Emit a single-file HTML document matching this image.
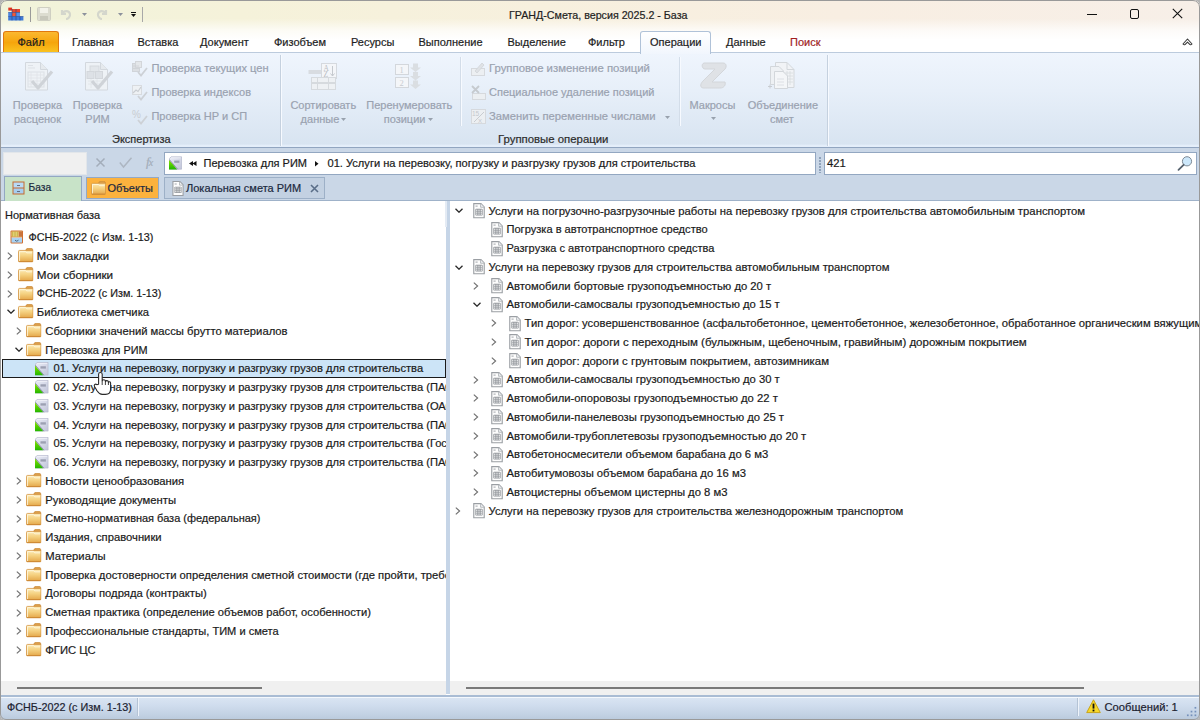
<!DOCTYPE html>
<html><head><meta charset="utf-8">
<style>
*{box-sizing:border-box;margin:0;padding:0}
html,body{width:1200px;height:720px;overflow:hidden;background:#b4b4b4}
body{font-family:"Liberation Sans",sans-serif;font-size:11px;color:#1a1a1a;position:relative;-webkit-text-stroke-width:0.2px}
.a{position:absolute;white-space:nowrap}
svg{position:absolute;overflow:visible}
#win{position:absolute;left:0;top:0;width:1200px;height:720px;border-radius:7px 7px 6px 6px;overflow:hidden;background:#fff}
#frame{position:absolute;left:0;top:0;width:1200px;height:720px;border:1px solid #999;border-radius:7px 7px 6px 6px;pointer-events:none}
#title{position:absolute;left:0;top:0;width:1200px;height:53px;background:linear-gradient(180deg,rgba(255,255,255,0) 0%,rgba(255,255,255,0) 35%,rgba(255,255,255,.75) 58%,#fff 75%,#fff 100%),linear-gradient(90deg,#f1f3da 0%,#f5f2da 20%,#f7f0de 45%,#f8eee2 70%,#f7efe8 100%)}
#ribbon{position:absolute;left:0;top:52px;width:1200px;height:96px;border-top:1px solid #bccbdd;background:linear-gradient(180deg,#eff5fd 0%,#e7eff9 40%,#d8e4f1 97%,#e4eefa 98%,#e4eefa 100%);border-bottom:1px solid #91a5c0}
.tab{position:absolute;top:31px;height:22px;line-height:22px;color:#1e1e1e}
.dis{color:#9aa2b0}
.lt{position:absolute;white-space:nowrap;line-height:14px}
.sep{position:absolute;width:1px;background:#c5d1df;box-shadow:1px 0 0 #f7faff}
#fbar{position:absolute;left:0;top:148px;width:1200px;height:53px;background:#cad7e7;border-bottom:1px solid #9fb2c9}
.panel{position:absolute;top:201px;background:#fff;overflow:hidden}
.row{position:absolute;height:18.75px;line-height:18.75px;white-space:nowrap;font-size:11.25px}
#status{position:absolute;left:0;top:695px;width:1200px;height:25px;border-top:2px solid #a9bcd4;box-shadow:inset 0 1px 0 #f4f8fd;background:linear-gradient(180deg,#dae5f3 0%,#d0ddee 35%,#c3d2e4 75%,#b9c9dc 100%)}
</style></head>
<body>

<svg width="0" height="0" style="position:absolute">
  <defs>
    <linearGradient id="fg" x1="0" y1="0" x2="0" y2="1"><stop offset="0" stop-color="#fdeab6"/><stop offset="0.45" stop-color="#f5d282"/><stop offset="1" stop-color="#e4a648"/></linearGradient>
    <linearGradient id="gd" x1="0" y1="0" x2="1" y2="1"><stop offset="0" stop-color="#eceef8"/><stop offset="1" stop-color="#c0c4d8"/></linearGradient>
    <linearGradient id="gg" x1="0" y1="0" x2="0" y2="1"><stop offset="0" stop-color="#8ae600"/><stop offset="1" stop-color="#1fb400"/></linearGradient>
    <symbol id="folder" viewBox="0 0 16 15">
      <path d="M8 3 Q8 0.3 10.5 0.3 H13.5 Q15.6 0.3 15.6 3 Z" fill="#dda04c" stroke="#c98a38" stroke-width="0.7"/>
      <rect x="0.5" y="2.5" width="15" height="12" rx="1" fill="url(#fg)" stroke="#d3923e" stroke-width="0.8"/>
      <path d="M1.6 13.6 V3.8 H8 L9 5 H14.6" fill="none" stroke="#fffbe8" stroke-width="0.9" opacity="0.9"/>
      <path d="M1 14 H15" stroke="#c98430" stroke-width="0.8"/>
    </symbol>
    <symbol id="doc" viewBox="0 0 12 16">
      <path d="M0.6 0.6 H8 L11.4 4 V15.4 H0.6 Z" fill="#fdfdfd" stroke="#9a9ea3" stroke-width="1.15"/>
      <path d="M7.6 0.8 V4.4 H11.2" fill="#eef0f2" stroke="#b0b4b8" stroke-width="0.9"/>
      <path d="M2.4 3.2 H4.6" stroke="#9ea2a7" stroke-width="1"/>
      <rect x="2.2" y="6" width="7.6" height="6.8" rx="0.9" fill="#92969b"/>
      <rect x="3.00" y="6.90" width="1.30" height="1.1" fill="#fff"/><rect x="5.35" y="6.90" width="1.30" height="1.1" fill="#fff"/><rect x="7.70" y="6.90" width="1.40" height="1.1" fill="#fff"/><rect x="3.00" y="8.90" width="1.30" height="1.1" fill="#fff"/><rect x="5.35" y="8.90" width="1.30" height="1.1" fill="#fff"/><rect x="7.70" y="8.90" width="1.40" height="1.1" fill="#fff"/><rect x="3.00" y="10.90" width="1.30" height="1.1" fill="#fff"/><rect x="5.35" y="10.90" width="1.30" height="1.1" fill="#fff"/><rect x="7.70" y="10.90" width="1.40" height="1.1" fill="#fff"/>
    </symbol>
    <symbol id="gdoc" viewBox="0 0 14 14">
      <path d="M2.2 0.4 H13.6 V13.6 H0.4 V2.2 Z" fill="url(#gd)" stroke="#b2b6ca" stroke-width="0.8"/>
      <path d="M2.2 1.4 H12.6" stroke="#f4f5fb" stroke-width="0.8"/>
      <path d="M0 3.6 L8.8 14 H0 Z" fill="url(#gg)"/>
      <path d="M0.4 3.4 L9.4 13.8" stroke="#8a8ea8" stroke-width="1"/>
      <rect x="5.6" y="4.4" width="5.6" height="2.4" fill="#9ca0b2"/>
    </symbol>
    <symbol id="chr" viewBox="0 0 6 8"><path d="M0.8 0.6 L4.6 4 L0.8 7.4" fill="none" stroke="#707070" stroke-width="1.15"/></symbol>
    <symbol id="chd" viewBox="0 0 8 5"><path d="M0.5 0.7 L4 4.2 L7.5 0.7" fill="none" stroke="#2a2a2a" stroke-width="1.3"/></symbol>
  </defs>
</svg>
<div id="win">
  <div id="title">
    <!-- app icon -->
    <svg style="left:8px;top:7px" width="16" height="14" viewBox="0 0 16 14">
      <rect x="0.3" y="0.6" width="3.8" height="3" fill="#e2331f"/>
      <rect x="4" y="2" width="8" height="3.5" fill="#e8452c"/>
      <rect x="4" y="5.5" width="4" height="4" fill="#f05a3a"/>
      <rect x="0.2" y="5.5" width="3.8" height="4" fill="#4b86e0"/>
      <rect x="8" y="5.5" width="4" height="4" fill="#5a94ea"/>
      <rect x="0.2" y="9.5" width="15.2" height="4" fill="#3f7ad8"/>
      <path d="M4 2 V13.5 M8 2 V13.5 M12 9.5 V13.5 M0.2 9.5 H15.4 M0.2 5.5 H12" stroke="#1a3f90" stroke-width="0.7" opacity="0.8"/>
    </svg>
    <div class="a" style="left:30px;top:7px;width:1px;height:15px;background:#9a9a9a"></div>
    <!-- save -->
    <svg style="left:37px;top:7px" width="14" height="14" viewBox="0 0 14 14">
      <rect x="0.5" y="0.5" width="13" height="13" rx="1" fill="#dcdcd0" stroke="#cfcfc2"/>
      <rect x="3" y="1" width="8" height="5" fill="#f2f2ea"/>
      <rect x="3" y="9" width="8" height="4" fill="#c8c8bc"/>
    </svg>
    <!-- undo -->
    <svg style="left:60px;top:9px" width="12" height="11" viewBox="0 0 12 11">
      <path d="M2 1 L2 5 L6 5 M2.5 4.5 C4 1.5 9 1 10 5 C10.5 7.5 8 10 6 10" fill="none" stroke="#d4d6cc" stroke-width="2.2"/>
    </svg>
    <svg style="left:82px;top:13px" width="5" height="3" viewBox="0 0 5 3"><path d="M0 0 H5 L2.5 3Z" fill="#8c919c"/></svg>
    <svg style="left:96px;top:9px" width="12" height="11" viewBox="0 0 12 11">
      <path d="M10 1 L10 5 L6 5 M9.5 4.5 C8 1.5 3 1 2 5 C1.5 7.5 4 10 6 10" fill="none" stroke="#d4d6cc" stroke-width="2.2"/>
    </svg>
    <svg style="left:118px;top:13px" width="5" height="3" viewBox="0 0 5 3"><path d="M0 0 H5 L2.5 3Z" fill="#8c919c"/></svg>
    <div class="a" style="left:131px;top:12px;width:5px;height:1px;background:#111"></div>
    <svg style="left:131px;top:14px" width="5" height="3" viewBox="0 0 5 3"><path d="M0 0 H5 L2.5 3Z" fill="#111"/></svg>
    <div class="a" style="left:142px;top:7px;width:1px;height:15px;background:#a8a8a8"></div>

    <div class="a" style="left:509px;top:8px;font-size:10.7px;line-height:14px;color:#1e1e1e">ГРАНД-Смета, версия 2025.2 - База</div>

    <!-- window controls -->
    <div class="a" style="left:1087px;top:14px;width:10px;height:1px;background:#111"></div>
    <div class="a" style="left:1130px;top:9px;width:9px;height:10px;border:1.2px solid #111;border-radius:2px"></div>
    <svg style="left:1172px;top:8px" width="11" height="11" viewBox="0 0 11 11"><path d="M0.8 0.8 L10.2 10.2 M10.2 0.8 L0.8 10.2" stroke="#111" stroke-width="1.1"/></svg>
    <svg style="left:1182px;top:37px" width="11" height="9" viewBox="0 0 11 9"><path d="M1 7 L5.5 2 L10 7 Q9 8.2 8 7.6 L5.5 5.2 L3 7.6 Q2 8.2 1 7 Z" fill="#fff" stroke="#3a3a3a" stroke-width="1.1" stroke-linejoin="round"/></svg>

    <!-- tabs -->
    <div class="a" style="left:3px;top:31px;width:56px;height:22px;border:1px solid #e0780e;border-bottom:none;border-radius:3px 3px 0 0;background:linear-gradient(180deg,#fbb830 0%,#f6a50c 50%,#fac522 100%)"></div>
    <div class="tab" style="left:17.5px">Файл</div>
    <div class="tab" style="left:72px">Главная</div>
    <div class="tab" style="left:137.5px">Вставка</div>
    <div class="tab" style="left:200px">Документ</div>
    <div class="tab" style="left:274px">Физобъем</div>
    <div class="tab" style="left:351px">Ресурсы</div>
    <div class="tab" style="left:418.5px">Выполнение</div>
    <div class="tab" style="left:507.5px">Выделение</div>
    <div class="tab" style="left:588px">Фильтр</div>
    <div class="a" style="left:640px;top:31px;width:71px;height:23px;border:1px solid #b0c2d8;border-bottom:none;border-radius:3px 3px 0 0;background:linear-gradient(180deg,#ffffff 0%,#f1f6fd 100%);z-index:2"></div>
    <div class="tab" style="left:650px;z-index:3">Операции</div>
    <div class="tab" style="left:726px">Данные</div>
    <div class="tab" style="left:790px;color:#a01e1e">Поиск</div>
  </div>

  <div id="ribbon"></div>

  <!-- ===== ribbon content ===== -->
  <!-- big icon: Проверка расценок -->
  <svg style="left:25px;top:62px" width="28" height="29" viewBox="0 0 28 29">
    <path d="M0.5 0.5 H15.5 L22.5 7.5 V28 H0.5 Z" fill="#eef2f6" stroke="#d3d8de"/>
    <path d="M15.5 0.5 V7.5 H22.5" fill="#e6eaee" stroke="#d3d8de"/>
    <path d="M3 3.5 H8 M3 6 H10" stroke="#dde1e6"/>
    <rect x="3" y="10" width="16" height="15" fill="none" stroke="#dce0e5"/>
    <path d="M3 13 H19 M3 16 H19 M3 19 H19 M3 22 H19 M6 10 V25 M12 10 V25 M15.5 10 V25" stroke="#dfe3e8" stroke-width="0.8"/>
    <path d="M7 19 L13 26 L27 9.5" fill="none" stroke="#cfd3d8" stroke-width="3.2" stroke-linejoin="round"/>
  </svg>
  <!-- big icon: Проверка РИМ -->
  <svg style="left:85px;top:62px" width="28" height="29" viewBox="0 0 28 29">
    <path d="M0.5 0.5 H15.5 L22.5 7.5 V28 H0.5 Z" fill="#eef2f6" stroke="#d3d8de"/>
    <path d="M15.5 0.5 V7.5 H22.5" fill="#e6eaee" stroke="#d3d8de"/>
    <rect x="5" y="4" width="9" height="6" fill="#e3e7eb" stroke="#d5d9de"/>
    <rect x="2" y="9.5" width="7" height="7" fill="#dde1e6" stroke="#d3d7dc"/>
    <rect x="10.5" y="9.5" width="7" height="7" fill="#dde1e6" stroke="#d3d7dc"/>
    <path d="M3 19 H19 M3 22 H19 M6 17 V26 M12 17 V26" stroke="#e0e4e8" stroke-width="0.8"/>
    <path d="M7 19 L13 26 L27 9.5" fill="none" stroke="#cfd3d8" stroke-width="3.2" stroke-linejoin="round"/>
  </svg>
  <div class="lt dis" style="left:12.5px;top:98.3px;width:50px;text-align:center">Проверка</div>
  <div class="lt dis" style="left:13.5px;top:112.2px;width:48px;text-align:center">расценок</div>
  <div class="lt dis" style="left:72.5px;top:98.3px;width:50px;text-align:center">Проверка</div>
  <div class="lt dis" style="left:84.5px;top:112.2px;width:26px;text-align:center">РИМ</div>
  <!-- small icons Экспертиза -->
  <svg style="left:132px;top:61px" width="16" height="16" viewBox="0 0 16 16">
    <rect x="0.5" y="2.5" width="7" height="8" fill="#dcdfe3" stroke="#d0d4d9"/>
    <rect x="3.5" y="0.5" width="6" height="6" fill="#e4e7ea" stroke="#d3d6da"/>
    <path d="M1 5 H7 M1 7.5 H7" stroke="#cdd1d6" stroke-width="0.8"/>
    <path d="M6 11 L9 14.5 L15 7" fill="none" stroke="#cdd1d6" stroke-width="1.8"/>
  </svg>
  <svg style="left:132px;top:85px" width="16" height="16" viewBox="0 0 16 16">
    <rect x="0.5" y="0.5" width="9" height="9" fill="#eef1f4" stroke="#d8dbdf"/>
    <path d="M1 8 L4 5 L6 6.5 L9 2" fill="none" stroke="#c9cdd2" stroke-width="1.2"/>
    <path d="M6 11 L9 14.5 L15 7" fill="none" stroke="#cdd1d6" stroke-width="1.8"/>
  </svg>
  <svg style="left:132px;top:109px" width="16" height="16" viewBox="0 0 16 16">
    <text x="0" y="9" font-size="10" font-family="Liberation Sans" fill="#c8ccd1">%</text>
    <path d="M6 11 L9 14.5 L15 7" fill="none" stroke="#cdd1d6" stroke-width="1.8"/>
  </svg>
  <div class="lt dis" style="left:151.4px;top:61.2px;font-size:11.13px">Проверка текущих цен</div>
  <div class="lt dis" style="left:151.4px;top:85.2px">Проверка индексов</div>
  <div class="lt dis" style="left:151.4px;top:109.2px">Проверка НР и СП</div>
  <div class="lt" style="left:112px;top:131.5px;color:#2c2c2c">Экспертиза</div>
  <div class="sep" style="left:280px;top:55px;height:91px"></div>

  <!-- sort -->
  <svg style="left:308px;top:63px" width="30" height="28" viewBox="0 0 30 28">
    <rect x="0.5" y="7" width="13" height="4" fill="#d8dce1"/>
    <rect x="13.5" y="0.5" width="15" height="15" fill="#f4f6f9" stroke="#d5d9de"/>
    <text x="15.5" y="7.5" font-size="7.5" font-family="Liberation Serif" fill="#b9bdc3">A</text>
    <text x="15.5" y="14.3" font-size="7.5" font-family="Liberation Serif" fill="#b9bdc3">Z</text>
    <path d="M24.5 3 V13 M22.5 10.5 L24.5 13 L26.5 10.5" fill="none" stroke="#c5c9ce"/>
    <rect x="3.5" y="14.5" width="24" height="5" fill="#eef1f4" stroke="#d6dade"/>
    <rect x="3.5" y="20.5" width="24" height="6" fill="#eef1f4" stroke="#d6dade"/>
    <path d="M9.5 14.5 V26.5 M20.5 14.5 V26.5" stroke="#d6dade"/>
  </svg>
  <!-- renumber -->
  <svg style="left:395px;top:63px" width="27" height="28" viewBox="0 0 27 28">
    <rect x="0.5" y="1.5" width="13" height="10" fill="#f4f6f9" stroke="#d3d7dc"/>
    <rect x="0.5" y="14.5" width="13" height="10" fill="#f4f6f9" stroke="#d3d7dc"/>
    <text x="4.5" y="10" font-size="8.5" font-family="Liberation Serif" fill="#c8ccd1">1</text>
    <text x="4.5" y="23" font-size="8.5" font-family="Liberation Serif" fill="#c8ccd1">2</text>
    <path d="M18 0.5 H23 V4.5 H26 L20.5 9 L15 4.5 H18Z M18 9 H23 V13 H26 L20.5 17.5 L15 13 H18Z M18 17.5 H23 V21.5 H26 L20.5 26 L15 21.5 H18Z" fill="#dadee2"/>
  </svg>
  <div class="lt dis" style="left:290.3px;top:98.3px;width:66px;text-align:center">Сортировать</div>
  <div class="lt dis" style="left:300.6px;top:112.2px">данные</div>
  <svg style="left:341px;top:118px" width="5" height="3" viewBox="0 0 5 3"><path d="M0 0 H5 L2.5 3Z" fill="#98a1ad"/></svg>
  <div class="lt dis" style="left:366.3px;top:98.3px">Перенумеровать</div>
  <div class="lt dis" style="left:383.7px;top:112.2px">позиции</div>
  <svg style="left:428px;top:118px" width="5" height="3" viewBox="0 0 5 3"><path d="M0 0 H5 L2.5 3Z" fill="#98a1ad"/></svg>
  <div class="sep" style="left:460px;top:57px;height:69px;background:#d3dde9"></div>

  <!-- group ops small icons -->
  <svg style="left:471px;top:61px" width="16" height="16" viewBox="0 0 16 16">
    <rect x="0.5" y="7.5" width="13" height="7" fill="#eceff2" stroke="#d6d9dd"/>
    <path d="M4 10 L11 2 L13 4 L6 12 Z" fill="#dfe2e6" stroke="#d0d4d8" stroke-width="0.8"/>
  </svg>
  <svg style="left:471px;top:85px" width="16" height="16" viewBox="0 0 16 16">
    <rect x="1.5" y="8.5" width="13" height="6" fill="#eceff2" stroke="#d6d9dd"/>
    <path d="M1 1 L8 8 M8 1 L1 8" stroke="#c6cacf" stroke-width="1.8"/>
  </svg>
  <svg style="left:471px;top:109px" width="16" height="16" viewBox="0 0 16 16">
    <rect x="0.5" y="0.5" width="14" height="14" fill="#eceff2" stroke="#d6d9dd"/>
    <text x="1" y="7" font-size="6.5" font-family="Liberation Sans" fill="#c4c8cd">15</text>
    <path d="M3 13 L13 3" stroke="#c8ccd1"/>
    <text x="7" y="13.5" font-size="6" font-family="Liberation Sans" fill="#c4c8cd">X</text>
  </svg>
  <div class="lt dis" style="left:489px;top:61.2px;font-size:11.35px">Групповое изменение позиций</div>
  <div class="lt dis" style="left:489px;top:85.2px">Специальное удаление позиций</div>
  <div class="lt dis" style="left:489px;top:109.2px;font-size:11.23px">Заменить переменные числами</div>
  <svg style="left:665px;top:116px" width="5" height="3" viewBox="0 0 5 3"><path d="M0 0 H5 L2.5 3Z" fill="#98a1ad"/></svg>
  <div class="lt" style="left:498px;top:131.5px;color:#2c2c2c;font-size:11.38px">Групповые операции</div>
  <div class="sep" style="left:679px;top:57px;height:69px;background:#d3dde9"></div>

  <!-- macros -->
  <svg style="left:700px;top:62px" width="28" height="27" viewBox="0 0 28 27">
    <path d="M4 1 H23 C27 1 27 6 24 8 L12 20 H25 C26 23 24 26 20 26 H3 C-1 25 1 21 3 19 L15 7 H5 C2 7 1 2 4 1 Z" fill="#dfe2e6" stroke="#d3d6da"/>
  </svg>
  <div class="lt dis" style="left:689.5px;top:98.3px">Макросы</div>
  <svg style="left:711px;top:117px" width="5" height="3" viewBox="0 0 5 3"><path d="M0 0 H5 L2.5 3Z" fill="#98a1ad"/></svg>
  <!-- merge -->
  <svg style="left:768px;top:62px" width="27" height="28" viewBox="0 0 27 28">
    <path d="M7.5 0.5 H19 L26 7.5 V25.5 H7.5 Z" fill="#f1f3f6" stroke="#d3d7db"/>
    <path d="M19 0.5 V7.5 H26" fill="none" stroke="#d3d7db"/>
    <path d="M16 11 H25 M16 14 H25 M16 17 H25 M16 20 H25 M19 9 V23 M22 9 V23" stroke="#d8dce0" stroke-width="0.8"/>
    <path d="M2.5 4.5 H11 L15.5 9 V22.5 H2.5 Z" fill="#eef1f4" stroke="#d3d7db"/>
    <path d="M6.5 9.5 H15 L19.5 14 V26.5 H6.5 Z" fill="#f4f6f8" stroke="#d3d7db"/>
    <path d="M9 17 H16 M9 20 H16 M9 23 H16" stroke="#d8dce0" stroke-width="0.8"/>
    <path d="M0 24.5 H4 M2 22.5 V26.5" stroke="#c8ccd1"/>
  </svg>
  <div class="lt dis" style="left:747.7px;top:98.3px">Объединение</div>
  <div class="lt dis" style="left:770px;top:112.2px">смет</div>
  <div class="sep" style="left:827px;top:55px;height:91px"></div>

  <div id="fbar"></div>

  <!-- formula bar -->
  <div class="a" style="left:3px;top:152px;width:84px;height:23px;background:#f0f0f0;border:1px solid #e2e6ea"></div>
  <svg style="left:96px;top:158px" width="9" height="9" viewBox="0 0 9 9"><path d="M0.5 0.5 L8.5 8.5 M8.5 0.5 L0.5 8.5" stroke="#a3adba" stroke-width="1.5"/></svg>
  <svg style="left:119px;top:157px" width="13" height="11" viewBox="0 0 13 11"><path d="M0.8 5.5 L4.5 10 L12.5 0.8" fill="none" stroke="#adb6c2" stroke-width="1.5"/></svg>
  <div class="a" style="left:146px;top:155px;font-family:'Liberation Serif';font-style:italic;font-size:13px;color:#a3adb9;line-height:14px">f<span style="font-size:10px;margin-left:-1px">x</span></div>
  <div class="a" style="left:164px;top:152px;width:652px;height:23px;background:#fff;border:1px solid #93a7c1"></div>
  <svg style="left:168.75px;top:156px" width="13" height="14" viewBox="0 0 13 14"><use href="#gdoc" width="13" height="14"/></svg>
  <svg style="left:189px;top:161px" width="8" height="5" viewBox="0 0 8 5"><path d="M0 2.5 L4 0 V5 Z M3.5 2.5 L7.5 0 V5 Z" fill="#111"/></svg>
  <div class="a" style="left:203.5px;top:155.8px;font-size:11px;line-height:14px">Перевозка для РИМ</div>
  <svg style="left:314.5px;top:160.8px" width="3.5" height="5.6" viewBox="0 0 3.5 5.6"><path d="M0 0 L3.5 2.8 L0 5.6 Z" fill="#111"/></svg>
  <div class="a" style="left:327.5px;top:155.8px;font-size:11.1px;line-height:14px">01. Услуги на перевозку, погрузку и разгрузку грузов для строительства</div>
  <div class="a" style="left:818.5px;top:157px;width:2px;height:16px;background:repeating-linear-gradient(180deg,#8fa2ba 0 1.5px,transparent 1.5px 3px)"></div>
  <div class="a" style="left:824px;top:152px;width:373px;height:23px;background:#fff;border:1px solid #93a7c1"></div>
  <div class="a" style="left:827px;top:155.8px;font-size:11.25px;line-height:14px">421</div>
  <svg style="left:1177px;top:155px" width="17" height="16" viewBox="0 0 17 16">
    <circle cx="10" cy="6.3" r="4.6" fill="#cde8fb" stroke="#7d8a96" stroke-width="1"/>
    <path d="M6.6 9.8 L1.5 14.8" stroke="#56626e" stroke-width="1.8" stroke-linecap="round"/>
  </svg>

  <!-- doc tabs -->
  <div class="a" style="left:4px;top:176px;width:78px;height:25px;background:#c8e3c8;border:1px solid #93a8c2;border-bottom:none"></div>
  <svg style="left:12px;top:181px" width="13" height="14" viewBox="0 0 13 14">
    <rect x="0.5" y="0.5" width="12" height="13" fill="#c66a2e"/>
    <rect x="1.5" y="1.5" width="10" height="5" fill="#b8daf6"/>
    <rect x="1.5" y="7.5" width="10" height="5" fill="#a6cdf0"/>
    <path d="M5 4.5 H8 M5 10.5 H8" stroke="#556" stroke-width="0.8"/>
  </svg>
  <div class="a" style="left:28.5px;top:181px;font-size:10.2px;line-height:14px;color:#1c2a40">База</div>
  <div class="a" style="left:85.5px;top:177px;width:73.5px;height:22px;background:#fcb23e;border:1px solid #93a9c6"></div>
  <svg style="left:90.5px;top:181px" width="15" height="14"><use href="#folder" width="15" height="14"/></svg>
  <div class="a" style="left:107.5px;top:181px;font-size:11px;line-height:14px;color:#1c2a40">Объекты</div>
  <div class="a" style="left:164px;top:177px;width:161px;height:22px;background:#c3d1e2;border:1px solid #9db0c7"></div>
  <svg style="left:172px;top:181px" width="12" height="15"><use href="#doc" width="12" height="15"/></svg>
  <div class="a" style="left:186px;top:181px;font-size:11px;line-height:14px;color:#1c2a40">Локальная смета РИМ</div>
  <svg style="left:310px;top:184px" width="9" height="9" viewBox="0 0 9 9"><path d="M1 1 L8 8 M8 1 L1 8" stroke="#5a6e88" stroke-width="1.6"/></svg>
  <div class="panel" id="lp" style="left:0;width:446px;height:480px"></div>
<div class="a" style="left:0;top:201px;width:446px;height:480px;overflow:hidden"><div class="a" style="left:0;top:-201px;width:446px;height:720px">
<div class="row" style="left:5px;top:205.70px;font-size:11px">Нормативная база</div>
<svg style="left:10px;top:229.70px" width="13.5" height="14" viewBox="0 0 13.5 14"><rect x="0.5" y="0.5" width="12.5" height="13" rx="1" fill="#cf6e30"/><rect x="1.5" y="1.5" width="10.5" height="5.2" fill="#f0e090"/><path d="M2.6 1.5 V6.7 M4.2 1.5 V6.7 M5.8 1.5 V6.7 M7.4 1.5 V6.7" stroke="#b9a02c" stroke-width="0.7"/><rect x="8.6" y="1.5" width="3.4" height="5.2" fill="#c8743e"/><rect x="1.5" y="7.6" width="10.5" height="5" fill="#a8d2f4"/><path d="M1.5 7.6 H12" stroke="#f6e8d8" stroke-width="0.6"/><path d="M5 10.2 L6.75 11.2 L8.5 10.2" stroke="#4a5a70" stroke-width="0.9" fill="none"/></svg>
<div class="row" style="left:28.50px;top:228.20px;font-size:10.80px">ФСНБ-2022 (с Изм. 1-13)</div>
<svg style="left:7.40px;top:252.40px" width="6" height="8"><use href="#chr" width="6" height="8"/></svg>
<svg style="left:17.75px;top:248.20px" width="15.5" height="14.5"><use href="#folder" width="15.5" height="14.5"/></svg>
<div class="row" style="left:36.80px;top:246.95px">Мои закладки</div>
<svg style="left:7.40px;top:271.15px" width="6" height="8"><use href="#chr" width="6" height="8"/></svg>
<svg style="left:17.75px;top:266.95px" width="15.5" height="14.5"><use href="#folder" width="15.5" height="14.5"/></svg>
<div class="row" style="left:36.80px;top:265.70px;font-size:11.69px">Мои сборники</div>
<svg style="left:7.40px;top:289.90px" width="6" height="8"><use href="#chr" width="6" height="8"/></svg>
<svg style="left:17.75px;top:285.70px" width="15.5" height="14.5"><use href="#folder" width="15.5" height="14.5"/></svg>
<div class="row" style="left:36.80px;top:284.45px;font-size:10.79px">ФСНБ-2022 (с Изм. 1-13)</div>
<svg style="left:6.60px;top:309.00px" width="8" height="5"><use href="#chd" width="8" height="5"/></svg>
<svg style="left:17.75px;top:304.45px" width="15.5" height="14.5"><use href="#folder" width="15.5" height="14.5"/></svg>
<div class="row" style="left:36.80px;top:303.20px">Библиотека сметчика</div>
<svg style="left:15.90px;top:327.40px" width="6" height="8"><use href="#chr" width="6" height="8"/></svg>
<svg style="left:26.25px;top:323.20px" width="15.5" height="14.5"><use href="#folder" width="15.5" height="14.5"/></svg>
<div class="row" style="left:45.30px;top:321.95px">Сборники значений массы брутто материалов</div>
<svg style="left:15.10px;top:346.50px" width="8" height="5"><use href="#chd" width="8" height="5"/></svg>
<svg style="left:26.25px;top:341.95px" width="15.5" height="14.5"><use href="#folder" width="15.5" height="14.5"/></svg>
<div class="row" style="left:45.30px;top:340.70px;font-size:10.88px">Перевозка для РИМ</div>
<div class="a" style="left:1.5px;top:359px;width:444.5px;height:19px;background:#cce4f7;border:1px solid #1a1a1a"></div>
<svg style="left:35.3px;top:361.55px" width="13.6" height="13.6"><use href="#gdoc" width="13.6" height="13.6"/></svg>
<div class="row" style="left:53.50px;top:359.45px;font-size:11.15px">01. Услуги на перевозку, погрузку и разгрузку грузов для строительства</div>
<svg style="left:35.3px;top:380.30px" width="13.6" height="13.6"><use href="#gdoc" width="13.6" height="13.6"/></svg>
<div class="row" style="left:53.50px;top:378.20px;font-size:11.15px">02. Услуги на перевозку, погрузку и разгрузку грузов для строительства (ПАО «Газпром»)</div>
<svg style="left:35.3px;top:399.05px" width="13.6" height="13.6"><use href="#gdoc" width="13.6" height="13.6"/></svg>
<div class="row" style="left:53.50px;top:396.95px;font-size:11.15px">03. Услуги на перевозку, погрузку и разгрузку грузов для строительства (ОАО «РЖД»)</div>
<svg style="left:35.3px;top:417.80px" width="13.6" height="13.6"><use href="#gdoc" width="13.6" height="13.6"/></svg>
<div class="row" style="left:53.50px;top:415.70px;font-size:11.15px">04. Услуги на перевозку, погрузку и разгрузку грузов для строительства (ПАО «Транснефть»)</div>
<svg style="left:35.3px;top:436.55px" width="13.6" height="13.6"><use href="#gdoc" width="13.6" height="13.6"/></svg>
<div class="row" style="left:53.50px;top:434.45px;font-size:11.15px">05. Услуги на перевозку, погрузку и разгрузку грузов для строительства (Госкорпорация)</div>
<svg style="left:35.3px;top:455.30px" width="13.6" height="13.6"><use href="#gdoc" width="13.6" height="13.6"/></svg>
<div class="row" style="left:53.50px;top:453.20px;font-size:11.15px">06. Услуги на перевозку, погрузку и разгрузку грузов для строительства (ПАО «Россети»)</div>
<svg style="left:15.90px;top:477.40px" width="6" height="8"><use href="#chr" width="6" height="8"/></svg>
<svg style="left:26.25px;top:473.20px" width="15.5" height="14.5"><use href="#folder" width="15.5" height="14.5"/></svg>
<div class="row" style="left:45.30px;top:471.95px">Новости ценообразования</div>
<svg style="left:15.90px;top:496.15px" width="6" height="8"><use href="#chr" width="6" height="8"/></svg>
<svg style="left:26.25px;top:491.95px" width="15.5" height="14.5"><use href="#folder" width="15.5" height="14.5"/></svg>
<div class="row" style="left:45.30px;top:490.70px">Руководящие документы</div>
<svg style="left:15.90px;top:514.90px" width="6" height="8"><use href="#chr" width="6" height="8"/></svg>
<svg style="left:26.25px;top:510.70px" width="15.5" height="14.5"><use href="#folder" width="15.5" height="14.5"/></svg>
<div class="row" style="left:45.30px;top:509.45px;font-size:10.97px">Сметно-нормативная база (федеральная)</div>
<svg style="left:15.90px;top:533.65px" width="6" height="8"><use href="#chr" width="6" height="8"/></svg>
<svg style="left:26.25px;top:529.45px" width="15.5" height="14.5"><use href="#folder" width="15.5" height="14.5"/></svg>
<div class="row" style="left:45.30px;top:528.20px">Издания, справочники</div>
<svg style="left:15.90px;top:552.40px" width="6" height="8"><use href="#chr" width="6" height="8"/></svg>
<svg style="left:26.25px;top:548.20px" width="15.5" height="14.5"><use href="#folder" width="15.5" height="14.5"/></svg>
<div class="row" style="left:45.30px;top:546.95px">Материалы</div>
<svg style="left:15.90px;top:571.15px" width="6" height="8"><use href="#chr" width="6" height="8"/></svg>
<svg style="left:26.25px;top:566.95px" width="15.5" height="14.5"><use href="#folder" width="15.5" height="14.5"/></svg>
<div class="row" style="left:45.30px;top:565.70px">Проверка достоверности определения сметной стоимости (где пройти, требования)</div>
<svg style="left:15.90px;top:589.90px" width="6" height="8"><use href="#chr" width="6" height="8"/></svg>
<svg style="left:26.25px;top:585.70px" width="15.5" height="14.5"><use href="#folder" width="15.5" height="14.5"/></svg>
<div class="row" style="left:45.30px;top:584.45px">Договоры подряда (контракты)</div>
<svg style="left:15.90px;top:608.65px" width="6" height="8"><use href="#chr" width="6" height="8"/></svg>
<svg style="left:26.25px;top:604.45px" width="15.5" height="14.5"><use href="#folder" width="15.5" height="14.5"/></svg>
<div class="row" style="left:45.30px;top:603.20px;font-size:11.18px">Сметная практика (определение объемов работ, особенности)</div>
<svg style="left:15.90px;top:627.40px" width="6" height="8"><use href="#chr" width="6" height="8"/></svg>
<svg style="left:26.25px;top:623.20px" width="15.5" height="14.5"><use href="#folder" width="15.5" height="14.5"/></svg>
<div class="row" style="left:45.30px;top:621.95px;font-size:11.07px">Профессиональные стандарты, ТИМ и смета</div>
<svg style="left:15.90px;top:646.15px" width="6" height="8"><use href="#chr" width="6" height="8"/></svg>
<svg style="left:26.25px;top:641.95px" width="15.5" height="14.5"><use href="#folder" width="15.5" height="14.5"/></svg>
<div class="row" style="left:45.30px;top:640.70px">ФГИС ЦС</div>
</div></div>
  <div class="panel" id="rp" style="left:450px;width:750px;height:480px"></div>
<div class="a" style="left:450px;top:201px;width:749px;height:480px;overflow:hidden"><div class="a" style="left:-450px;top:-201px;width:1200px;height:720px">
<svg style="left:455.00px;top:208.30px" width="8" height="5"><use href="#chd" width="8" height="5"/></svg>
<svg style="left:473.00px;top:203.00px" width="12" height="15.5"><use href="#doc" width="12" height="15.5"/></svg>
<div class="row" style="left:488.50px;top:201.70px;font-size:11.32px">Услуги на погрузочно-разгрузочные работы на перевозку грузов для строительства автомобильным транспортом</div>
<svg style="left:491.00px;top:221.75px" width="12" height="15.5"><use href="#doc" width="12" height="15.5"/></svg>
<div class="row" style="left:506.50px;top:220.45px;font-size:11.08px">Погрузка в автотранспортное средство</div>
<svg style="left:491.00px;top:240.50px" width="12" height="15.5"><use href="#doc" width="12" height="15.5"/></svg>
<div class="row" style="left:506.50px;top:239.20px;font-size:11.06px">Разгрузка с автотранспортного средства</div>
<svg style="left:455.00px;top:264.55px" width="8" height="5"><use href="#chd" width="8" height="5"/></svg>
<svg style="left:473.00px;top:259.25px" width="12" height="15.5"><use href="#doc" width="12" height="15.5"/></svg>
<div class="row" style="left:488.50px;top:257.95px">Услуги на перевозку грузов для строительства автомобильным транспортом</div>
<svg style="left:473.30px;top:281.90px" width="6" height="8"><use href="#chr" width="6" height="8"/></svg>
<svg style="left:491.00px;top:278.00px" width="12" height="15.5"><use href="#doc" width="12" height="15.5"/></svg>
<div class="row" style="left:506.50px;top:276.70px">Автомобили бортовые грузоподъемностью до 20 т</div>
<svg style="left:473.00px;top:302.05px" width="8" height="5"><use href="#chd" width="8" height="5"/></svg>
<svg style="left:491.00px;top:296.75px" width="12" height="15.5"><use href="#doc" width="12" height="15.5"/></svg>
<div class="row" style="left:506.50px;top:295.45px">Автомобили-самосвалы грузоподъемностью до 15 т</div>
<svg style="left:491.30px;top:319.40px" width="6" height="8"><use href="#chr" width="6" height="8"/></svg>
<svg style="left:509.00px;top:315.50px" width="12" height="15.5"><use href="#doc" width="12" height="15.5"/></svg>
<div class="row" style="left:524.50px;top:314.20px">Тип дорог: усовершенствованное (асфальтобетонное, цементобетонное, железобетонное, обработанное органическим вяжущим материалом)</div>
<svg style="left:491.30px;top:338.15px" width="6" height="8"><use href="#chr" width="6" height="8"/></svg>
<svg style="left:509.00px;top:334.25px" width="12" height="15.5"><use href="#doc" width="12" height="15.5"/></svg>
<div class="row" style="left:524.50px;top:332.95px;font-size:11.49px">Тип дорог: дороги с переходным (булыжным, щебеночным, гравийным) дорожным покрытием</div>
<svg style="left:491.30px;top:356.90px" width="6" height="8"><use href="#chr" width="6" height="8"/></svg>
<svg style="left:509.00px;top:353.00px" width="12" height="15.5"><use href="#doc" width="12" height="15.5"/></svg>
<div class="row" style="left:524.50px;top:351.70px;font-size:11.40px">Тип дорог: дороги с грунтовым покрытием, автозимникам</div>
<svg style="left:473.30px;top:375.65px" width="6" height="8"><use href="#chr" width="6" height="8"/></svg>
<svg style="left:491.00px;top:371.75px" width="12" height="15.5"><use href="#doc" width="12" height="15.5"/></svg>
<div class="row" style="left:506.50px;top:370.45px">Автомобили-самосвалы грузоподъемностью до 30 т</div>
<svg style="left:473.30px;top:394.40px" width="6" height="8"><use href="#chr" width="6" height="8"/></svg>
<svg style="left:491.00px;top:390.50px" width="12" height="15.5"><use href="#doc" width="12" height="15.5"/></svg>
<div class="row" style="left:506.50px;top:389.20px">Автомобили-опоровозы грузоподъемностью до 22 т</div>
<svg style="left:473.30px;top:413.15px" width="6" height="8"><use href="#chr" width="6" height="8"/></svg>
<svg style="left:491.00px;top:409.25px" width="12" height="15.5"><use href="#doc" width="12" height="15.5"/></svg>
<div class="row" style="left:506.50px;top:407.95px">Автомобили-панелевозы грузоподъемностью до 25 т</div>
<svg style="left:473.30px;top:431.90px" width="6" height="8"><use href="#chr" width="6" height="8"/></svg>
<svg style="left:491.00px;top:428.00px" width="12" height="15.5"><use href="#doc" width="12" height="15.5"/></svg>
<div class="row" style="left:506.50px;top:426.70px">Автомобили-трубоплетевозы грузоподъемностью до 20 т</div>
<svg style="left:473.30px;top:450.65px" width="6" height="8"><use href="#chr" width="6" height="8"/></svg>
<svg style="left:491.00px;top:446.75px" width="12" height="15.5"><use href="#doc" width="12" height="15.5"/></svg>
<div class="row" style="left:506.50px;top:445.45px">Автобетоносмесители объемом барабана до 6 м3</div>
<svg style="left:473.30px;top:469.40px" width="6" height="8"><use href="#chr" width="6" height="8"/></svg>
<svg style="left:491.00px;top:465.50px" width="12" height="15.5"><use href="#doc" width="12" height="15.5"/></svg>
<div class="row" style="left:506.50px;top:464.20px">Автобитумовозы объемом барабана до 16 м3</div>
<svg style="left:473.30px;top:488.15px" width="6" height="8"><use href="#chr" width="6" height="8"/></svg>
<svg style="left:491.00px;top:484.25px" width="12" height="15.5"><use href="#doc" width="12" height="15.5"/></svg>
<div class="row" style="left:506.50px;top:482.95px">Автоцистерны объемом цистерны до 8 м3</div>
<svg style="left:455.30px;top:506.90px" width="6" height="8"><use href="#chr" width="6" height="8"/></svg>
<svg style="left:473.00px;top:503.00px" width="12" height="15.5"><use href="#doc" width="12" height="15.5"/></svg>
<div class="row" style="left:488.50px;top:501.70px">Услуги на перевозку грузов для строительства железнодорожным транспортом</div>
</div></div>
  <div class="a" style="left:0;top:681px;width:446px;height:14px;background:#f0f0f0"></div>
  <div class="a" style="left:450px;top:681px;width:750px;height:14px;background:#f0f0f0"></div>
  <div class="a" style="left:446px;top:201px;width:4px;height:493px;background:#c6d5e7"></div>
  <div class="a" style="left:445px;top:201px;width:1.5px;height:26px;background:#e4ebf4"></div>
  <div class="a" style="left:17px;top:687px;width:245px;height:2px;background:#7a7a7a"></div>
  <div class="a" style="left:466px;top:687px;width:618px;height:2px;background:#7a7a7a"></div>
  <div id="status"></div>
  <div class="a" style="left:7px;top:700.4px;font-size:10.8px;line-height:14px;color:#1c2230">ФСНБ-2022 (с Изм. 1-13)</div>
  <div class="a" style="left:137px;top:698px;width:1px;height:18px;background:#b4c3d5;box-shadow:1px 0 0 #eef3fa"></div>
  <div class="a" style="left:1077px;top:698px;width:1px;height:18px;background:#b4c3d5;box-shadow:1px 0 0 #eef3fa"></div>
  <svg style="left:1085.5px;top:699px" width="15" height="14.5" viewBox="0 0 15 14.5">
    <path d="M7.5 0.8 L14.3 13.6 H0.7 Z" fill="#f7d82a" stroke="#c9a418" stroke-width="1" stroke-linejoin="round"/>
    <rect x="6.6" y="4.6" width="1.8" height="5" fill="#111"/>
    <rect x="6.6" y="10.6" width="1.8" height="1.8" fill="#111"/>
  </svg>
  <div class="a" style="left:1104.5px;top:700.3px;font-size:11.2px;line-height:14px;color:#1c2230">Сообщений: 1</div>
  <svg style="left:1186px;top:706px" width="11" height="11" viewBox="0 0 11 11">
    <g fill="#7490ba"><rect x="8.55" y="0.95" width="1.7" height="1.7"/><rect x="4.65" y="4.75" width="1.7" height="1.7"/><rect x="8.55" y="4.75" width="1.7" height="1.7"/><rect x="0.95" y="8.45" width="1.7" height="1.7"/><rect x="4.65" y="8.45" width="1.7" height="1.7"/><rect x="8.55" y="8.45" width="1.7" height="1.7"/></g>
  </svg>
  <!-- hand cursor -->
  <svg style="left:93px;top:371px" width="19" height="25" viewBox="0 0 19 25">
    <path d="M5.6 13.2 V3.2 C5.6 1 9.2 1 9.2 3.2 V9.8 C9.4 8.4 12.2 8.4 12.4 9.8 V10.6 C12.6 9.3 15.2 9.3 15.4 10.8 V11.6 C15.6 10.4 17.6 10.6 17.6 12 V18 C17.6 21.5 15.5 23.4 12.5 23.4 H9.2 C6.5 23.4 5.5 22 4.2 20 L1.5 15.5 C0.6 14 2.4 12.3 3.8 13.6 Z" fill="#fff" stroke="#2a2a2a" stroke-width="1.1" stroke-linejoin="round"/>
    <path d="M9.2 9.8 V14 M12.4 10.6 V14 M15.4 11.6 V14" stroke="#2a2a2a" stroke-width="0.9"/>
  </svg>
</div>
<div id="frame"></div>
</body></html>
